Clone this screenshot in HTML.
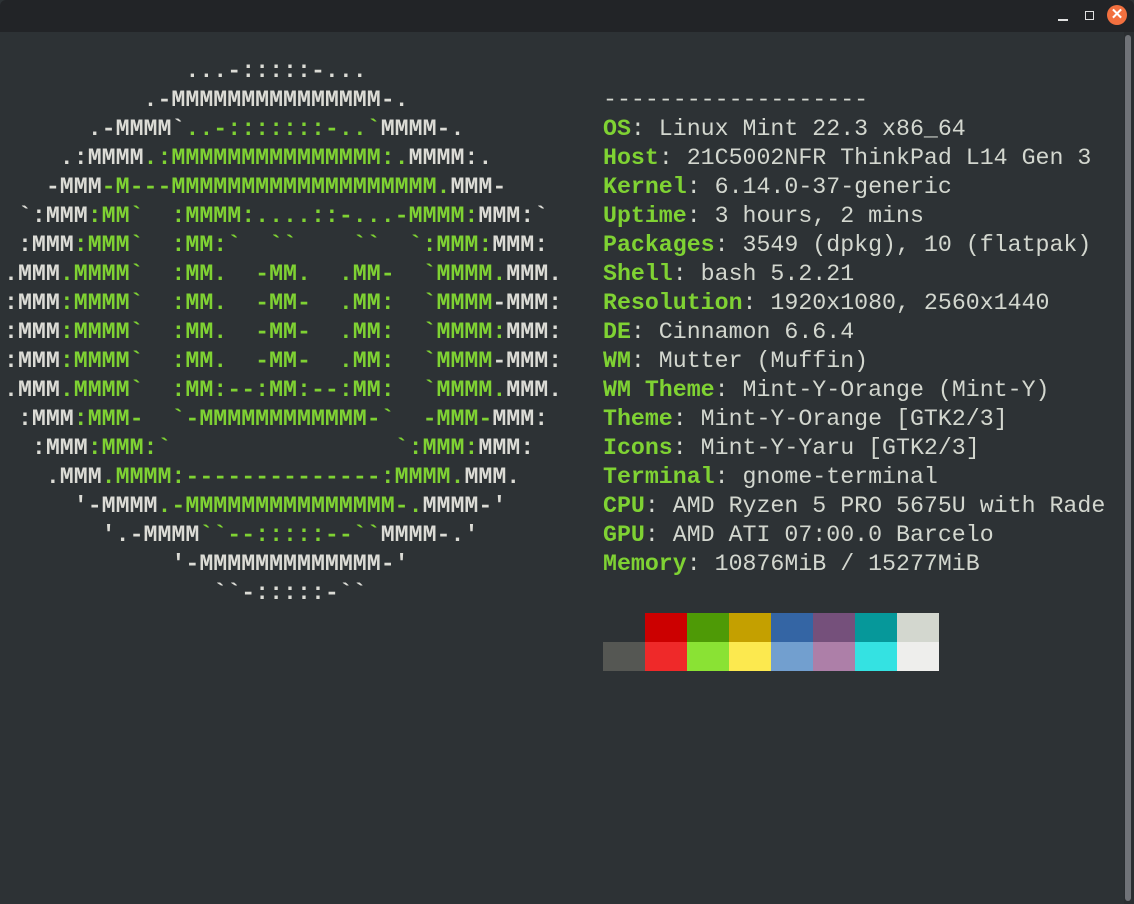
<!DOCTYPE html>
<html><head><meta charset="utf-8"><style>
html,body{margin:0;padding:0;width:1134px;height:904px;overflow:hidden;background:#2e3436;}
.win{position:absolute;left:0;top:0;width:1134px;height:904px;background:#2d3235;}
.tb{position:absolute;left:0;top:0;width:1134px;height:32px;background:#222427;border-radius:6px 6px 0 0;}
.pre{position:absolute;margin:0;font-family:"Liberation Mono",monospace;font-size:23.25px;line-height:29px;white-space:pre;color:#d3d7cf;}
.a{left:4px;top:57px;font-weight:bold;color:#dcdcd6;}
.g{color:#7fd233;}
.i{left:603px;top:86px;}
.i b{color:#7fd233;}
.sw{position:absolute;width:42px;height:29px;}
.sb{position:absolute;left:1124px;top:32px;width:10px;height:872px;background:#2a2e31;}
.th{position:absolute;left:1125px;top:35px;width:6px;height:866px;background:#707378;border-radius:3px;}
</style></head><body><div class="win">
<div class="tb">
<div style="position:absolute;left:1058px;top:19px;width:10px;height:1.5px;background:#e0e0e0"></div>
<div style="position:absolute;left:1085px;top:11px;width:7px;height:7px;border:1.2px solid #e0e0e0"></div>
<div style="position:absolute;left:1107px;top:5px;width:20px;height:20px;border-radius:50%;background:#f2703f;color:#fff;font:bold 15px 'Liberation Sans',sans-serif;text-align:center;line-height:20px">✕</div>
</div>
<pre class="pre a">             ...-:::::-...
          .-MMMMMMMMMMMMMMM-.
      .-MMMM`<span class="g">..-:::::::-..`</span>MMMM-.
    .:MMMM<span class="g">.:MMMMMMMMMMMMMMM:.</span>MMMM:.
   -MMM<span class="g">-M---MMMMMMMMMMMMMMMMMMM.</span>MMM-
 `:MMM<span class="g">:MM`  :MMMM:....::-...-MMMM:</span>MMM:`
 :MMM<span class="g">:MMM`  :MM:`  ``    ``  `:MMM:</span>MMM:
.MMM<span class="g">.MMMM`  :MM.  -MM.  .MM-  `MMMM.</span>MMM.
:MMM<span class="g">:MMMM`  :MM.  -MM-  .MM:  `MMMM</span>-MMM:
:MMM<span class="g">:MMMM`  :MM.  -MM-  .MM:  `MMMM:</span>MMM:
:MMM<span class="g">:MMMM`  :MM.  -MM-  .MM:  `MMMM</span>-MMM:
.MMM<span class="g">.MMMM`  :MM:--:MM:--:MM:  `MMMM.</span>MMM.
 :MMM<span class="g">:MMM-  `-MMMMMMMMMMMM-`  -MMM-</span>MMM:
  :MMM<span class="g">:MMM:`                `:MMM:</span>MMM:
   .MMM<span class="g">.MMMM:--------------:MMMM.</span>MMM.
     '-MMMM<span class="g">.-MMMMMMMMMMMMMMM-.</span>MMMM-'
       '.-MMMM<span class="g">``--:::::--``</span>MMMM-.'
            '-MMMMMMMMMMMMM-'
               ``-:::::-``</pre>
<pre class="pre i">-------------------
<b>OS</b>: Linux Mint 22.3 x86_64
<b>Host</b>: 21C5002NFR ThinkPad L14 Gen 3
<b>Kernel</b>: 6.14.0-37-generic
<b>Uptime</b>: 3 hours, 2 mins
<b>Packages</b>: 3549 (dpkg), 10 (flatpak)
<b>Shell</b>: bash 5.2.21
<b>Resolution</b>: 1920x1080, 2560x1440
<b>DE</b>: Cinnamon 6.6.4
<b>WM</b>: Mutter (Muffin)
<b>WM Theme</b>: Mint-Y-Orange (Mint-Y)
<b>Theme</b>: Mint-Y-Orange [GTK2/3]
<b>Icons</b>: Mint-Y-Yaru [GTK2/3]
<b>Terminal</b>: gnome-terminal
<b>CPU</b>: AMD Ryzen 5 PRO 5675U with Rade
<b>GPU</b>: AMD ATI 07:00.0 Barcelo
<b>Memory</b>: 10876MiB / 15277MiB</pre>
<div class="sw" style="left:645px;top:613px;background:#cc0000"></div>
<div class="sw" style="left:687px;top:613px;background:#4e9a06"></div>
<div class="sw" style="left:729px;top:613px;background:#c4a000"></div>
<div class="sw" style="left:771px;top:613px;background:#3465a4"></div>
<div class="sw" style="left:813px;top:613px;background:#75507b"></div>
<div class="sw" style="left:855px;top:613px;background:#06989a"></div>
<div class="sw" style="left:897px;top:613px;background:#d3d7cf"></div>
<div class="sw" style="left:603px;top:642px;background:#555753"></div>
<div class="sw" style="left:645px;top:642px;background:#ef2929"></div>
<div class="sw" style="left:687px;top:642px;background:#8ae234"></div>
<div class="sw" style="left:729px;top:642px;background:#fce94f"></div>
<div class="sw" style="left:771px;top:642px;background:#729fcf"></div>
<div class="sw" style="left:813px;top:642px;background:#ad7fa8"></div>
<div class="sw" style="left:855px;top:642px;background:#34e2e2"></div>
<div class="sw" style="left:897px;top:642px;background:#eeeeec"></div>
<div class="sb"></div><div class="th"></div>
</div></body></html>
